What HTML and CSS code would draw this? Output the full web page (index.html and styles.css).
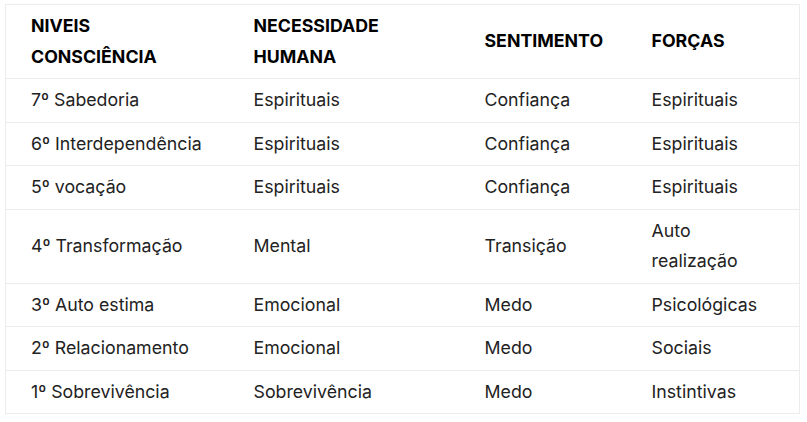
FILE: index.html
```html
<!DOCTYPE html>
<html lang="pt">
<head>
<meta charset="utf-8">
<link rel="stylesheet" href="styles.css">
</head>
<body>
<table class="levels">
  <colgroup>
    <col class="c1"><col class="c2"><col class="c3"><col class="c4">
  </colgroup>
  <thead>
    <tr><th>Niveis Consciência</th><th>Necessidade Humana</th><th>Sentimento</th><th>Forças</th></tr>
  </thead>
  <tbody>
    <tr><td>7º Sabedoria</td><td>Espirituais</td><td>Confiança</td><td>Espirituais</td></tr>
    <tr><td>6º Interdependência</td><td>Espirituais</td><td>Confiança</td><td>Espirituais</td></tr>
    <tr><td>5º vocação</td><td>Espirituais</td><td>Confiança</td><td>Espirituais</td></tr>
    <tr><td>4º Transformação</td><td>Mental</td><td>Transição</td><td>Auto realização</td></tr>
    <tr><td>3º Auto estima</td><td>Emocional</td><td>Medo</td><td>Psicológicas</td></tr>
    <tr><td>2º Relacionamento</td><td>Emocional</td><td>Medo</td><td>Sociais</td></tr>
    <tr><td>1º Sobrevivência</td><td>Sobrevivência</td><td>Medo</td><td>Instintivas</td></tr>
  </tbody>
</table>
</body>
</html>
```
FILE: styles.css
```css
html, body { margin: 0; background: #fff; }
body {
  padding: 4px 5px;
  font-family: Inter, "Noto Sans", sans-serif;
  font-size: 17.75px;
  color: #222;
}
.levels {
  width: 794px;
  border-collapse: collapse;
  table-layout: fixed;
  border: 1px solid #ececec;
}
.c1 { width: 223px; }
.c2 { width: 231px; }
.c3 { width: 167px; }
.c4 { width: 173px; }
.levels th, .levels td {
  padding: 6px 22px 6px 25px;
  line-height: 30.5px;
  text-align: left;
  vertical-align: middle;
  border-top: 1px solid #ececec;
}
.levels th {
  font-weight: 700;
  text-transform: uppercase;
  color: #000;
}
.levels td { font-weight: 400; }
```
